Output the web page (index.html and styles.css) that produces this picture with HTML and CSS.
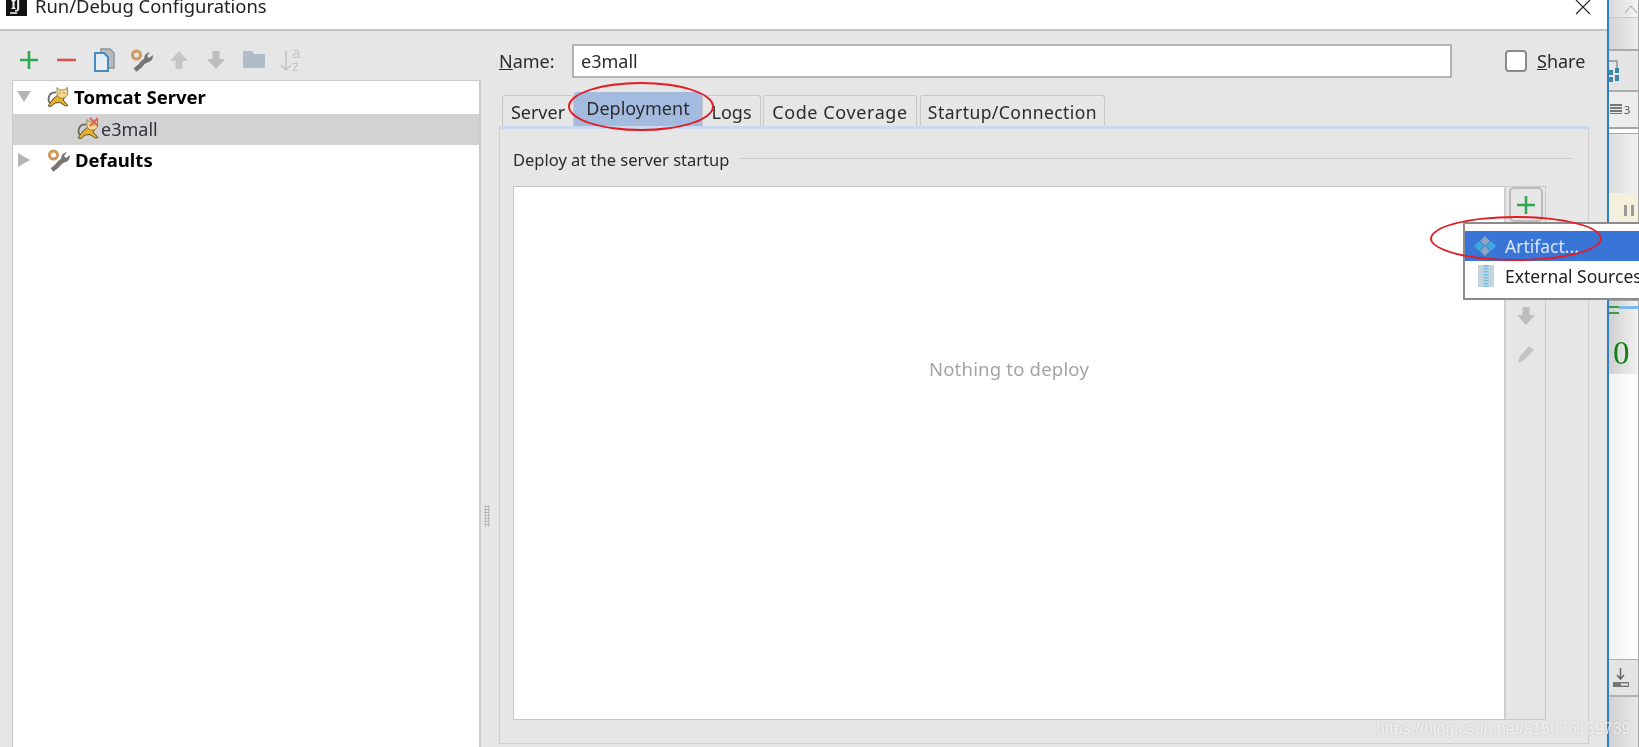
FILE: index.html
```html
<!DOCTYPE html>
<html lang="en">
<head>
<meta charset="utf-8">
<title>Run/Debug Configurations</title>
<link rel="stylesheet" href="styles.css">
</head>
<body>
<svg class="defs" width="0" height="0" aria-hidden="true">
  <symbol id="cat" viewBox="0 0 22 20">
    <path d="M2.500 16C0 10 3 5 9 5.500" fill="none" stroke="#6a6a6a" stroke-width="1.800"/>
    <path d="M1 19L6 12L11 8L18 10L16 13L21 18.500L18.500 19L13 15.500L8 16L4 19.500Z" fill="#e6b02e" stroke="#5f5226" stroke-width="1"/>
    <path d="M10 0.500L12.500 3H17L20.500 0.500V8L17.500 11H13L10 8Z" fill="#f5d98c" stroke="#85743f" stroke-width=".8"/>
    <path d="M12.500 6h1M16.500 6h1" stroke="#4a3a1a" stroke-width="1"/>
  </symbol>
  <symbol id="wrench" viewBox="0 0 23 24">
    <circle cx="6.500" cy="7" r="4" fill="none" stroke="#cf9a5c" stroke-width="3"/>
    <path d="M5 22L10 18C12 15 14 13 17 12" fill="none" stroke="#757575" stroke-width="4.500"/>
    <path d="M15 14C13 9 15 5 20 4L17 8L19 10L23 7C23 12 20 15 15 14Z" fill="#757575"/>
  </symbol>
  <symbol id="plus" viewBox="0 0 18 18">
    <path d="M9 0V18M0 9H18" stroke="#2fa84f" stroke-width="2.600"/>
  </symbol>
  <symbol id="up" viewBox="0 0 18 18">
    <path d="M9 0L18 10H12.500V18H5.500V10H0Z" fill="#c6c6c6"/>
  </symbol>
  <symbol id="down" viewBox="0 0 18 18">
    <path d="M9 18L18 8H12.500V0H5.500V8H0Z" fill="#bdbdbd"/>
  </symbol>
</svg>

<div class="screen">
  <div class="dialog">
    <header class="titlebar">
      <svg class="app-icon" width="21" height="16" viewBox="0 0 21 16"><rect width="21" height="16" fill="#111"/><text x="5" y="9" class="ij">IJ</text><path d="M4 13H11" stroke="#fff" stroke-width="1.500"/></svg>
      <span class="title">Run/Debug Configurations</span>
      <svg class="close" width="16" height="15" viewBox="0 0 16 15"><path d="M1 0L15 14M15 0L1 14" stroke="#222" stroke-width="1.100"/></svg>
    </header>
    <div class="body">
      <aside class="left">
        <div class="toolbar">
          <span class="tool"><svg width="18" height="18"><use href="#plus"/></svg></span>
          <span class="tool"><svg width="19" height="4" viewBox="0 0 19 4"><rect width="19" height="2.500" y=".7" fill="#d9534a"/></svg></span>
          <span class="tool"><svg width="22" height="24" viewBox="0 0 22 24"><path d="M8 1H17L21 5V20H15V9L11 5H8Z" fill="#b9bcbe" stroke="#8f9498" stroke-width="1.500"/><path d="M2 5H11L15 9V23H2Z" fill="#e6eef4" stroke="#4a8bbd" stroke-width="2"/></svg></span>
          <span class="tool"><svg width="23" height="24"><use href="#wrench"/></svg></span>
          <span class="tool"><svg width="18" height="18"><use href="#up"/></svg></span>
          <span class="tool"><svg width="18" height="18"><use href="#down"/></svg></span>
          <span class="tool"><svg width="22" height="17" viewBox="0 0 22 17"><path d="M0 0H9L11 3H22V17H0Z" fill="#aebdc7"/></svg></span>
          <span class="tool"><svg width="22" height="24" viewBox="0 0 22 24"><path d="M6 3V22M1 17L6 22L11 17" fill="none" stroke="#c4c4c4" stroke-width="1.600"/><text x="12" y="10" class="sort-letter">a</text><text x="12" y="23" class="sort-letter">z</text></svg></span>
        </div>
        <div class="tree">
          <div class="row group">
            <span class="tri-down"></span>
            <svg width="22" height="20"><use href="#cat"/></svg>
            <span class="row-label">Tomcat Server</span>
          </div>
          <div class="row child">
            <span class="cat-wrap">
              <svg width="22" height="20"><use href="#cat"/></svg>
              <svg class="cross" width="10" height="10" viewBox="0 0 10 10"><path d="M1 1L9 9M9 1L1 9" stroke="#e0605a" stroke-width="2"/></svg>
            </span>
            <span class="child-label">e3mall</span>
          </div>
          <div class="row group">
            <span class="tri-right"></span>
            <svg width="23" height="24"><use href="#wrench"/></svg>
            <span class="row-label">Defaults</span>
          </div>
        </div>
      </aside>
      <div class="splitter"><span class="grip"></span></div>
      <main class="main">
        <div class="name-row">
          <label class="name-label"><u>N</u>ame:</label>
          <div class="name-input">e3mall</div>
          <span class="checkbox"></span>
          <span class="share"><u>S</u>hare</span>
        </div>
        <nav class="tabs">
          <span class="tab tab-server">Server</span>
          <span class="tab tab-active">Deployment</span>
          <span class="tab tab-logs">Logs</span>
          <span class="tab tab-code">Code Coverage</span>
          <span class="tab tab-startup">Startup/Connection</span>
        </nav>
        <section class="panel">
          <div class="legend"><span>Deploy at the server startup</span><i class="legend-line"></i></div>
          <div class="list">
            <div class="list-white"><span class="empty">Nothing to deploy</span></div>
            <div class="list-tools">
              <span class="add-btn"><svg width="18" height="18"><use href="#plus"/></svg></span>
              <svg class="list-down" width="18" height="18"><use href="#down"/></svg>
              <svg class="list-pencil" width="18" height="18" viewBox="0 0 18 18"><path d="M12 1L17 5L7 15L1 18L3 11Z" fill="#c4c4c4"/></svg>
            </div>
          </div>
        </section>
      </main>
    </div>
  </div>

  <div class="strip">
    <div class="s s1"><svg width="14" height="8" viewBox="0 0 14 8"><path d="M1 8L7 1L13 8" fill="none" stroke="#999" stroke-width="1"/></svg></div>
    <div class="s s2"></div>
    <div class="s s3"><svg width="10" height="22" viewBox="0 0 10 22"><path d="M0 1H8V8" fill="none" stroke="#8f8f8f" stroke-width="1.500"/><path d="M0 10H4V15H0ZM6 8H10V13H6ZM0 17H4V22H0ZM6 15H10V21H6Z" fill="#3f86ad"/></svg></div>
    <div class="s s4"><span class="lines"></span><span class="num">3</span></div>
    <div class="s s5"></div>
    <div class="s s6"></div>
    <div class="s s7"><span class="pause"></span></div>
    <div class="s s8"></div>
    <div class="s s9"><i class="g1"></i><i class="g2"></i><span class="zero">0</span></div>
    <div class="s s10"></div>
    <div class="s s11"><svg width="18" height="20" viewBox="0 0 18 20"><path d="M8.500 0V10M5 7L8.500 11L12 7" fill="none" stroke="#666" stroke-width="1.500"/><rect x="1" y="14" width="16" height="5" fill="#777"/><rect x="9" y="15.500" width="7" height="2" fill="#eee"/></svg></div>
    <div class="s s12"></div>
  </div>

  <div class="popup">
    <div class="pop-item pop-on">
      <svg width="22" height="22" viewBox="0 0 22 22"><path d="M11 1L16 6L11 11L6 6Z" fill="#8ea3bf"/><path d="M11 11L16 16L11 21L6 16Z" fill="#8ea3bf"/><path d="M5 6L10 11L5 16L0 11Z" fill="#3fa9dc"/><path d="M17 6L22 11L17 16L12 11Z" fill="#3fa9dc"/></svg>
      <span>Artifact...</span>
    </div>
    <div class="pop-item">
      <svg width="16" height="22" viewBox="0 0 16 22"><rect width="16" height="22" fill="#c5d3dc"/><path d="M8 0V22" stroke="#6ec1e8" stroke-width="5" stroke-dasharray="1.500 1.500"/></svg>
      <span>External Sources...</span>
    </div>
  </div>
  <div class="ring ring-tab"></div>
  <div class="ring ring-menu"></div>
  <div class="watermark">https://blog.csdn.net/a15076159739</div>
</div>
</body>
</html>
```

FILE: styles.css
```css
* { box-sizing: border-box; }
html, body { margin: 0; height: 100%; overflow: hidden; background: #fff; }
.defs { position: absolute; }
.screen {
  position: relative;
  display: flex;
  width: 1639px;
  height: 747px;
  overflow: hidden;
  font-family: "Noto Sans", sans-serif;
  font-size: 18px;
  color: #2b2b2b;
  filter: blur(.35px);
}
.dialog {
  width: 1609px;
  height: 747px;
  display: flex;
  flex-direction: column;
  background: #e6e6e6;
  border-right: 2px solid #2f7fc1;
}
.titlebar {
  height: 31px;
  flex: none;
  display: flex;
  align-items: flex-start;
  background: #fff;
  border-bottom: 2px solid #c4c4c4;
  overflow: hidden;
  padding-left: 6px;
}
.app-icon { flex: none; }
.ij { font: 700 13px "Noto Sans", sans-serif; fill: #eee; }
.title {
  margin-left: 8px;
  margin-top: -6px;
  font-size: 18.400px;
  line-height: 24px;
  color: #222;
}
.close { margin-left: auto; margin-right: 16px; margin-top: 0; }
.body { flex: 1; display: flex; min-height: 0; }
.left { width: 481px; flex: none; display: flex; flex-direction: column; }
.toolbar { height: 49px; flex: none; display: flex; align-items: center; padding-left: 10px; padding-top: 8px; }
.tool { width: 37.500px; display: flex; justify-content: center; align-items: center; }
.sort-letter { font: 15px "Noto Sans", sans-serif; fill: #c4c4c4; }
.tree { flex: 1; margin-left: 12px; background: #fff; border: 1px solid #cbcbcb; border-bottom: 0; border-right-width: 2px; padding-top: 1px; }
.row { height: 31.500px; display: flex; align-items: center; }
.group { padding-left: 4px; font-weight: 700; color: #000; font-size: 18.500px; line-height: 24px; padding-bottom: 2px; }
.tri-down { width: 0; height: 0; border-left: 7px solid transparent; border-right: 7px solid transparent; border-top: 11px solid #b4b4b4; margin-right: 16px; }
.tri-right { width: 0; height: 0; border-top: 7px solid transparent; border-bottom: 7px solid transparent; border-left: 12px solid #b4b4b4; margin-left: 1px; margin-right: 17px; }
.row-label { margin-left: 5px; }
.child { background: #d2d2d2; padding-left: 64px; color: #2f3340; line-height: 24px; }
.cat-wrap { position: relative; display: flex; }
.cross { position: absolute; top: -2px; right: 0; }
.child-label { margin-left: 2px; }
.splitter { width: 18px; flex: none; padding-top: 474px; padding-left: 3px; }
.grip { display: block; width: 6px; height: 22px; background-image: radial-gradient(circle, #b9b9b9 1px, transparent 1.200px); background-size: 3px 3px; }
.main { flex: 1; min-width: 0; display: flex; flex-direction: column; padding-top: 13px; padding-right: 18px; }
.name-row { display: flex; align-items: center; height: 34px; flex: none; }
.name-label { width: 73px; flex: none; line-height: 26px; }
.name-input { width: 880px; height: 34px; flex: none; background: #fff; border: 2px solid #b4b4b4; padding-left: 7px; line-height: 30px; }
.checkbox { width: 22px; height: 22px; margin-left: 53px; flex: none; background: #fff; border: 2px solid #8a8a8a; border-radius: 4px; }
.share { margin-left: 10px; line-height: 26px; }
.tabs { display: flex; align-items: flex-end; height: 34px; margin-top: 14px; flex: none; padding-left: 3px; }
.tab { height: 31px; display: flex; align-items: center; justify-content: center; border: 1px solid #c8c8c8; border-bottom: 0; border-radius: 3px 3px 0 0; line-height: 26px; padding-top: 1px; }
.tab-server { width: 72px; }
.tab-active { width: 128px; height: 34px; background: #a3bbdf; border-color: #a3bbdf; padding-top: 0; padding-bottom: 3px; }
.tab-logs { width: 59px; }
.tab-code { width: 154px; margin-left: 2px; letter-spacing: .6px; }
.tab-startup { width: 185px; margin-left: 3px; font-size: 17.500px; letter-spacing: .45px; }
.panel { height: 618px; flex: none; border: 1px solid #cfcfcf; border-top: 3px solid #c9daf0; padding: 0 16px 0 13px; }
.legend { height: 57px; display: flex; align-items: center; padding-top: 4px; font-size: 16.500px; line-height: 24px; }
.legend-line { flex: 1; height: 1px; background: #c9c9c9; margin-left: 10px; margin-bottom: 3px; }
.list { height: 534px; width: 1033px; display: flex; border: 1px solid #c8c8c8; }
.list-white { flex: 1; background: #fff; text-align: center; padding-top: 170px; border-right: 2px solid #cfcfcf; }
.empty { color: #a4a4a4; font-size: 18.500px; line-height: 24px; letter-spacing: .2px; display: block; }
.list-tools { width: 39px; flex: none; display: flex; flex-direction: column; align-items: center; }
.add-btn { width: 34px; height: 35px; display: flex; align-items: center; justify-content: center; border: 2px solid #bcbcbc; border-radius: 5px; }
.list-down { margin-top: 85px; }
.list-pencil { margin-top: 20px; }

.strip { width: 30px; height: 747px; flex: none; display: flex; flex-direction: column; border-right: 1px solid #a8a8a8; background: #e4e4e4; }
.s { flex: none; display: flex; align-items: center; }
.s1 { height: 18px; background: linear-gradient(90deg, #d8d8d8, #f4f4f4); border-bottom: 1px solid #c8c8c8; justify-content: flex-end; }
.s2 { height: 33px; background: linear-gradient(90deg, #d4d4d4, #ececec); border-bottom: 2px solid #acacac; }
.s3 { height: 41px; background: #e4e4e4; border-bottom: 2px solid #acacac; }
.s4 { height: 37px; background: #ececec; border-bottom: 2px solid #a4a4a4; padding-left: 1px; }
.lines { width: 12px; height: 11px; background: repeating-linear-gradient(#777 0 1.500px, transparent 1.500px 3px); }
.num { font-size: 11px; margin-left: 2px; color: #555; }
.s5 { height: 5px; background: #fff; border-bottom: 1px solid #a8a8a8; }
.s6 { height: 59px; background: linear-gradient(90deg, #dcdcdc, #f1f1f1); }
.s7 { height: 30px; background: #f5f0dc; padding-left: 15px; padding-top: 4px; }
.pause { width: 10px; height: 11px; border-left: 3px solid #9b9b9b; border-right: 3px solid #9b9b9b; }
.s8 { height: 77px; background: #e4e4e4; }
.s9 { height: 74px; background: linear-gradient(90deg, #cfcfcf, #f2f2f2); position: relative; align-items: flex-end; border-top: 1px solid #a8a8a8; }
.g1, .g2 { position: absolute; top: 5px; left: 0; width: 10px; height: 1.500px; background: #3c9a4c; }
.g2 { top: 11px; }
.g1::after { content: ""; position: absolute; left: 10px; top: 0; width: 21px; height: 3px; background: #79b8e8; }
.zero { font-family: "Liberation Serif", serif; font-size: 33px; line-height: 38px; color: #108010; margin-left: 4px; padding-bottom: 2px; }
.s10 { height: 286px; background: linear-gradient(90deg, #f2f2f2, #fff); border-bottom: 1px solid #b0b0b0; }
.s11 { height: 37px; background: #e4e4e4; border-bottom: 2px solid #b0b0b0; padding-left: 3px; }
.s12 { flex: 1; background: linear-gradient(90deg, #d2d2d2, #e8e8e8); }

.popup { position: absolute; left: 1463px; top: 222px; width: 220px; height: 78px; background: #fff; border: 2px solid #8c8c8c; padding-top: 7px; white-space: nowrap; }
.pop-item { height: 30px; display: flex; align-items: center; padding-left: 13px; color: #222; font-size: 17.500px; line-height: 24px; }
.pop-item span { margin-left: 11px; }
.pop-on { background: #3875d7; color: #d9e6fa; }
.pop-on svg { margin-left: -4px; }
.pop-on span { margin-left: 9px; }
.ring { position: absolute; border: 2px solid #e21b24; border-radius: 50%; }
.ring-tab { left: 568px; top: 82px; width: 146px; height: 49px; }
.ring-menu { left: 1430px; top: 216px; width: 172px; height: 45px; }
.watermark { position: absolute; left: 1376px; top: 719px; font-family: "Liberation Sans", sans-serif; font-size: 16px; line-height: 20px; color: rgba(255,255,255,.7); text-shadow: 0 0 2px rgba(120,120,120,.35); white-space: nowrap; }
```
